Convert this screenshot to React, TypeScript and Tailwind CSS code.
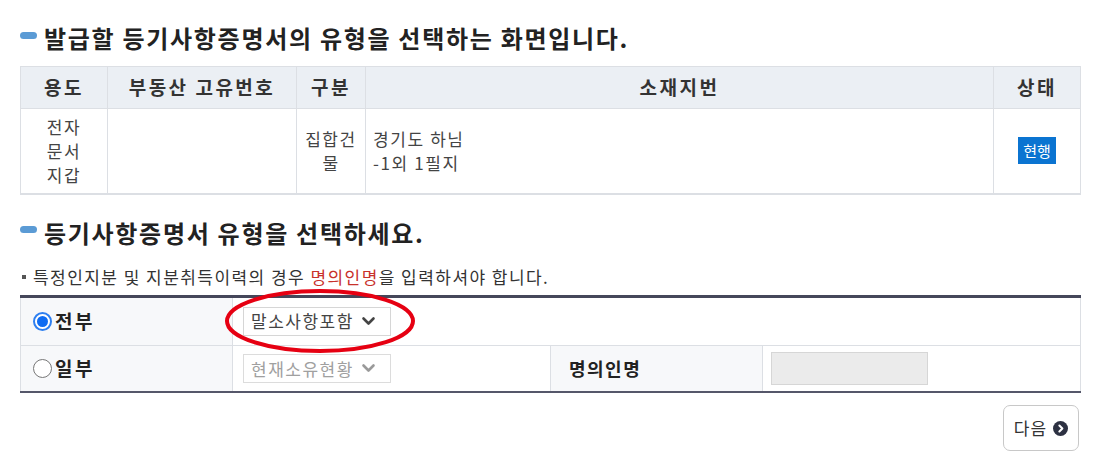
import React from 'react'

const font = { fontFamily: '"Noto Sans CJK KR", "Noto Sans", sans-serif' }

function Title({ children }: { children: React.ReactNode }) {
  return (
    <div className="flex items-center h-[36px]">
      <span className="w-[17px] h-[7px] rounded-full bg-[#5b9bd5] mr-[7px] -mt-[6px]" />
      <h2 className="text-[24px] leading-[36px] font-bold text-[#222] tracking-[1.7px]">{children}</h2>
    </div>
  )
}

function Chevron({ color }: { color: string }) {
  return (
    <svg width="15" height="10" viewBox="0 0 15 10" className="ml-[7px]">
      <path d="M2.5 2.5l5 5 5-5" fill="none" stroke={color} strokeWidth="2.6" strokeLinecap="round" strokeLinejoin="round" />
    </svg>
  )
}

function Radio({ checked }: { checked: boolean }) {
  return checked ? (
    <span className="w-[19px] h-[19px] rounded-full border-[2px] border-[#2e7ff0] bg-white flex items-center justify-center">
      <span className="w-[11px] h-[11px] rounded-full bg-[#0f6cf2]" />
    </span>
  ) : (
    <span className="w-[19px] h-[19px] rounded-full border-[1.5px] border-[#777] bg-white" />
  )
}

export default function App() {
  return (
    <div className="w-[1094px] h-[465px] bg-white pl-[20px] pr-[14px] pt-[20px] text-[#333]" style={font}>
      <Title>발급할 등기사항증명서의 유형을 선택하는 화면입니다.</Title>

      <table className="mt-[10px] w-[1060px] border-collapse table-fixed border-b-2 border-b-[#dcdfe4]">
        <colgroup>
          <col className="w-[87px]" />
          <col className="w-[189px]" />
          <col className="w-[69px]" />
          <col className="w-[628px]" />
          <col className="w-[87px]" />
        </colgroup>
        <thead>
          <tr className="h-[42px] bg-[#ebeff4]">
            {['용도', '부동산 고유번호', '구분', '소재지번', '상태'].map(h => (
              <th key={h} className="border border-[#dcdfe4] text-[19px] font-bold text-[#333] tracking-[2.5px]">
                {h}
              </th>
            ))}
          </tr>
        </thead>
        <tbody>
          <tr className="h-[85px] text-[17px] leading-[24px] text-[#444] tracking-[1.6px]">
            <td className="border border-[#dcdfe4] text-center">
              전자<br />문서<br />지갑
            </td>
            <td className="border border-[#dcdfe4]" />
            <td className="border border-[#dcdfe4] text-center">
              집합건<br />물
            </td>
            <td className="border border-[#dcdfe4] px-[7px] text-left">
              경기도 하님<br />-1외 1필지
            </td>
            <td className="border border-[#dcdfe4] text-center tracking-normal">
              <span className="inline-block bg-[#0b74d1] text-white text-[15px] leading-[27px] px-[5px] h-[27px]">현행</span>
            </td>
          </tr>
        </tbody>
      </table>

      <div className="mt-[20px]">
        <Title>등기사항증명서 유형을 선택하세요.</Title>
      </div>

      <p className="mt-[14px] h-[24px] leading-[24px] text-[17px] text-[#333] tracking-[1.45px] flex items-center">
        <span className="w-[4px] h-[4px] bg-[#555] mr-[7px] ml-[2px]" />
        특정인지분 및 지분취득이력의 경우&nbsp;<span className="text-[#c8312b]">명의인명</span>을 입력하셔야 합니다.
      </p>

      <div className="relative mt-[6px] w-[1060px]">
        <table className="w-full border-collapse table-fixed border-t-[3px] border-t-[#45475a] border-b-2 border-b-[#55576a]">
          <colgroup>
            <col className="w-[212px]" />
            <col className="w-[318px]" />
            <col className="w-[212px]" />
            <col className="w-[318px]" />
          </colgroup>
          <tbody>
            <tr className="h-[49px]">
              <td className="border-l border-r border-b border-[#dcdfe4] bg-[#f7f8fa] pl-[12px]">
                <div className="flex items-center gap-[3px]">
                  <Radio checked />
                  <span className="text-[19px] font-bold text-[#222] tracking-[2.5px]">전부</span>
                </div>
              </td>
              <td colSpan={3} className="border-r border-b border-[#dcdfe4] pl-[10px]">
                <div className="w-[148px] h-[29px] border border-[#d6d6d6] flex items-center pl-[7px] text-[17px] text-[#444] tracking-[1.5px]">
                  말소사항포함
                  <Chevron color="#444" />
                </div>
              </td>
            </tr>
            <tr className="h-[47px]">
              <td className="border-l border-r border-[#dcdfe4] bg-[#f7f8fa] pl-[12px]">
                <div className="flex items-center gap-[3px]">
                  <Radio checked={false} />
                  <span className="text-[19px] font-bold text-[#222] tracking-[2.5px]">일부</span>
                </div>
              </td>
              <td className="border-r border-[#dcdfe4] pl-[10px]">
                <div className="w-[148px] h-[29px] border border-[#dcdcdc] flex items-center pl-[7px] text-[17px] text-[#a0a0a0] tracking-[1.5px]">
                  현재소유현황
                  <Chevron color="#9a9a9a" />
                </div>
              </td>
              <td className="border-r border-[#dcdfe4] bg-[#f7f8fa] pl-[18px] text-[18px] font-bold text-[#222] tracking-[1.5px]">
                명의인명
              </td>
              <td className="border-r border-[#dcdfe4] pl-[8px]">
                <div className="w-[157px] h-[33px] bg-[#ebebeb] border border-[#d6d6d6]" />
              </td>
            </tr>
          </tbody>
        </table>

        <svg className="absolute left-[203px] top-[-7px] pointer-events-none" width="194" height="66" viewBox="0 0 194 66">
          <ellipse cx="97" cy="33" rx="93" ry="30" fill="none" stroke="#e60012" strokeWidth="4" />
        </svg>
      </div>

      <div className="w-[1060px] flex justify-end mt-[12px]">
        <button className="w-[76px] h-[46px] mr-[1px] border border-[#c8c8c8] rounded-[7px] bg-white flex items-center justify-center gap-[6px] text-[17px] text-[#333] tracking-[1px]">
          다음
          <svg width="15" height="15" viewBox="0 0 16 16">
            <circle cx="8" cy="8" r="8" fill="#2d3142" />
            <path d="M6.8 4.8l3.2 3.2-3.2 3.2" fill="none" stroke="#fff" strokeWidth="2.2" strokeLinecap="round" strokeLinejoin="round" />
          </svg>
        </button>
      </div>
    </div>
  )
}
